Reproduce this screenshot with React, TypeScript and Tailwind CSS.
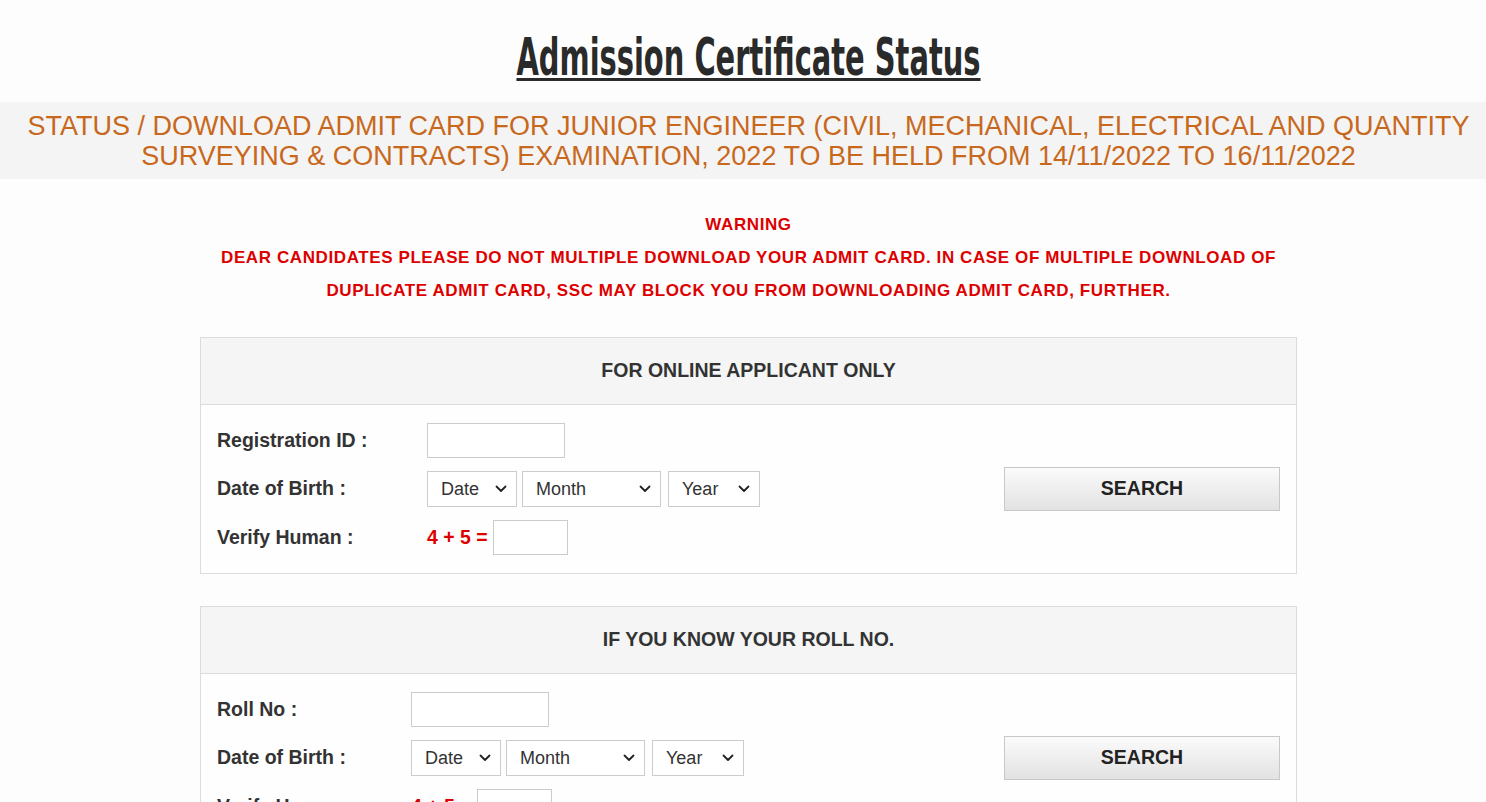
import React from "react";

const Chevron = () => (
  <svg width="12" height="8" viewBox="0 0 12 8" className="pointer-events-none absolute right-[10px] top-1/2 -translate-y-1/2">
    <path d="M1.5 1.5 L6 6 L10.5 1.5" fill="none" stroke="#222" strokeWidth="1.8" strokeLinecap="round" strokeLinejoin="round" />
  </svg>
);

function Sel({ label, w }: { label: string; w: string }) {
  return (
    <div className={`relative h-[36px] ${w}`}>
      <select className="h-full w-full appearance-none border border-[#ccc] bg-white pl-[13px] text-[18px] font-normal text-[#333] outline-none">
        <option>{label}</option>
      </select>
      <Chevron />
    </div>
  );
}

function Card({ title, firstLabel, labelW }: { title: string; firstLabel: string; labelW: string }) {
  return (
    <div className="w-[1097px] border border-[#dcdcdc] bg-[#fefefe]">
      <div className="flex h-[67px] items-center justify-center border-b border-[#dcdcdc] bg-[#f5f5f5] text-[19.5px] font-bold text-[#333]">
        {title}
      </div>
      <div className="flex items-center justify-between pb-[18px] pl-[16px] pr-[16px] pt-[18px]">
        <div className="flex flex-col gap-[13px] text-[19.5px] font-bold text-[#333]">
          <div className="flex h-[35px] items-center">
            <div className={labelW}>{firstLabel}</div>
            <input className="h-[35px] w-[138px] border border-[#ccc] bg-white" />
          </div>
          <div className="flex h-[36px] items-center">
            <div className={labelW}>Date of Birth :</div>
            <div className="flex gap-[5px]">
              <Sel label="Date" w="w-[90px]" />
              <Sel label="Month" w="w-[139px]" />
              <div className="ml-[2px]">
                <Sel label="Year" w="w-[92px]" />
              </div>
            </div>
          </div>
          <div className="flex h-[35px] items-center">
            <div className={labelW}>Verify Human :</div>
            <span className="mr-[5px] text-[#dd0000]">4 + 5 =</span>
            <input className="h-[35px] w-[75px] border border-[#ccc] bg-white" />
          </div>
        </div>
        <button className="h-[44px] w-[276px] border border-[#c8c8c8] bg-gradient-to-b from-[#fbfbfb] to-[#e2e2e2] text-[19.5px] font-bold text-[#222]">
          SEARCH
        </button>
      </div>
    </div>
  );
}

export default function App() {
  return (
    <div className="h-[802px] w-full overflow-hidden bg-[#fdfdfd] text-[#333]" style={{ fontFamily: '"Liberation Sans", Arial, sans-serif' }}>
      <div className="flex h-[102px] items-center justify-center pl-[11px] pt-[12px]">
        <h1
          className="scale-x-[0.618] whitespace-nowrap text-[52px] font-bold leading-none text-[#2a2a2a] underline decoration-[3px] underline-offset-[3px]"
          style={{ fontFamily: '"DejaVu Sans Condensed", "Liberation Sans", sans-serif' }}
        >
          Admission Certificate Status
        </h1>
      </div>
      <div className="flex h-[77px] items-center justify-center bg-[#f4f4f4] pl-[11px] text-center text-[27px] leading-[30px] text-[#c8681c]">
        <div>
          STATUS / DOWNLOAD ADMIT CARD FOR JUNIOR ENGINEER (CIVIL, MECHANICAL, ELECTRICAL AND QUANTITY
          <br />
          SURVEYING &amp; CONTRACTS) EXAMINATION, 2022 TO BE HELD FROM 14/11/2022 TO 16/11/2022
        </div>
      </div>
      <div className="flex flex-col items-center pl-[11px]">
        <div className="mt-[29px] text-center text-[17px] font-bold leading-[33px] tracking-[0.6px] text-[#dd0000]">
          WARNING
          <br />
          DEAR CANDIDATES PLEASE DO NOT MULTIPLE DOWNLOAD YOUR ADMIT CARD. IN CASE OF MULTIPLE DOWNLOAD OF
          <br />
          DUPLICATE ADMIT CARD, SSC MAY BLOCK YOU FROM DOWNLOADING ADMIT CARD, FURTHER.
        </div>
        <div className="mt-[30px] flex flex-col gap-[32px]">
          <Card title="FOR ONLINE APPLICANT ONLY" firstLabel="Registration ID :" labelW="w-[210px]" />
          <Card title="IF YOU KNOW YOUR ROLL NO." firstLabel="Roll No :" labelW="w-[194px]" />
        </div>
      </div>
    </div>
  );
}
